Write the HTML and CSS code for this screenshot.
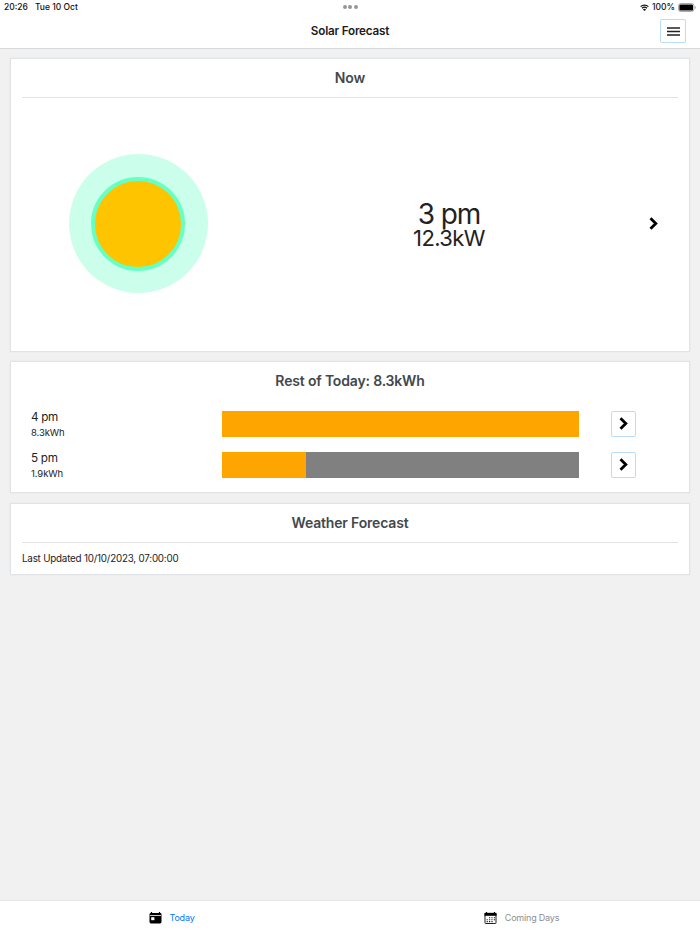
FILE: index.html
```html
<!DOCTYPE html>
<html lang="en">

<head>
    <meta charset="UTF-8">
    <meta name="viewport" content="width=device-width, initial-scale=1.0">
    <title>Solar Forecast</title>
    <link rel="stylesheet" href="styles.css">
</head>

<body>
    <header class="header">
        <div class="status-bar">
            <div class="status-left">
                <span class="status-time">20:26</span>
                <span class="status-date">Tue 10 Oct</span>
            </div>
            <div class="dots"><i></i><i></i><i></i></div>
            <div class="status-right">
                <svg class="wifi" viewBox="0 0 18 14" width="9" height="7">
                    <path d="M1.2 5.2a11.2 11.2 0 0 1 15.6 0M4 8.600a7.200 7.200 0 0 1 10 0" fill="none" stroke="#111" stroke-width="2.500" />
                    <path d="M9 14 5.900 10.900a4.500 4.500 0 0 1 6.200 0z" fill="#111" />
                </svg>
                <span class="status-power">100%</span>
                <svg class="battery" viewBox="0 0 18 9" width="18" height="9">
                    <rect x=".5" y=".5" width="15.400" height="8" rx="2.200" fill="#fff" stroke="#aaa" />
                    <rect x="1.400" y="1.400" width="13.600" height="6.200" rx="1.200" />
                    <path d="M16.800 3v3q.9-.4.9-1.500T16.800 3z" fill="#999" />
                </svg>
            </div>
        </div>
        <div class="nav-bar">
            <h1 class="nav-title">Solar Forecast</h1>
            <button class="icon-btn menu-btn" aria-label="Menu">
                <svg viewBox="0 0 13 9" width="13" height="9">
                    <path d="M0 1h13M0 4.500h13M0 8h13" stroke="#222" stroke-width="1.300" />
                </svg>
            </button>
        </div>
    </header>

    <main class="content">
        <section class="card card-now">
            <h2 class="card-title title-now">Now</h2>
            <hr class="divider">
            <div class="now">
                <div class="sun-halo">
                    <div class="sun"></div>
                </div>
                <div class="now-reading">
                    <div class="now-hour">3 pm</div>
                    <div class="now-power">12.3kW</div>
                </div>
                <svg class="chevron" viewBox="0 0 9 13" width="9" height="13">
                    <path d="M1.500 1.300 6.800 6.500 1.500 11.700" />
                </svg>
            </div>
        </section>

        <section class="card card-rest">
            <h2 class="card-title">Rest of Today: 8.3kWh</h2>
            <div class="hours">
                <div class="hour-row">
                    <div class="hour-label">
                        <div class="hour">4 pm</div>
                        <div class="energy">8.3kWh</div>
                    </div>
                    <div class="bar">
                        <div class="bar-fill" style="width: 100%"></div>
                    </div>
                    <button class="icon-btn" aria-label="4 pm details">
                        <svg class="chevron" viewBox="0 0 9 13" width="9" height="13">
                            <path d="M1.500 1.300 6.800 6.500 1.500 11.700" />
                        </svg>
                    </button>
                </div>
                <div class="hour-row">
                    <div class="hour-label">
                        <div class="hour">5 pm</div>
                        <div class="energy">1.9kWh</div>
                    </div>
                    <div class="bar">
                        <div class="bar-fill" style="width: 23.5%"></div>
                    </div>
                    <button class="icon-btn" aria-label="5 pm details">
                        <svg class="chevron" viewBox="0 0 9 13" width="9" height="13">
                            <path d="M1.500 1.300 6.800 6.500 1.500 11.700" />
                        </svg>
                    </button>
                </div>
            </div>
        </section>

        <section class="card card-weather">
            <h2 class="card-title">Weather Forecast</h2>
            <hr class="divider">
            <p class="updated">Last Updated 10/10/2023, 07:00:00</p>
        </section>
    </main>

    <nav class="tab-bar">
        <a class="tab active">
            <svg viewBox="0 0 13 12" width="13" height="12">
                <path d="M2.500 0v2M10.500 0v2" stroke="#000" stroke-width="1.200" />
                <rect x=".5" y="1" width="12" height="10.500" rx="1.400" />
                <path d="M1 3.500h11" stroke="#fff" stroke-width=".8" />
                <rect x="2.200" y="5.200" width="3.200" height="3" fill="#fff" />
            </svg>
            <span class="tab-label">Today</span>
        </a>
        <a class="tab">
            <svg viewBox="0 0 13 12" width="13" height="12">
                <path d="M2.500 0v2M10.500 0v2" stroke="#000" stroke-width="1.200" />
                <rect x="1" y="1.300" width="11" height="10.200" rx=".6" fill="#fff" stroke="#222" />
                <path d="M.5 1h12v2.800H.5z" />
                <path d="M5 5.800h6M2.600 7.700h8.400M2.600 9.600h6" stroke="#222" stroke-width="1.100" stroke-dasharray="1.200 1.200" />
            </svg>
            <span class="tab-label">Coming Days</span>
        </a>
    </nav>
</body>

</html>
```
FILE: styles.css
```css
* {
    box-sizing: border-box;
}

body {
    margin: 0;
    height: 934px;
    display: flex;
    flex-direction: column;
    background-color: #f1f1f1;
    font-family: Inter, Roboto, sans-serif;
    color: #222;
}

h1,
h2,
p {
    margin: 0;
}

.header {
    height: 49px;
    background-color: #fff;
    border-bottom: 1px solid #d8dadb;
}

.status-bar {
    height: 14px;
    padding: 0 4px 0 4px;
    display: grid;
    grid-template-columns: 1fr auto 1fr;
    align-items: center;
    font-size: 8.5px;
    font-weight: 500;
    color: #111;
}

.status-left {
    display: flex;
    gap: 7px;
}

.dots {
    display: flex;
    gap: 1.5px;
}

.dots i {
    width: 4px;
    height: 4px;
    border-radius: 50%;
    background-color: #969696;
}

.status-right {
    display: flex;
    align-items: center;
    justify-content: flex-end;
    gap: 3px;
}

.nav-bar {
    height: 34px;
    padding: 0 14px 0 40px;
    display: flex;
    align-items: center;
}

.nav-title {
    flex: 1;
    text-align: center;
    font-size: 11.7px;
    font-weight: 600;
    letter-spacing: -0.2px;
    color: #1c1c1e;
}

.icon-btn {
    width: 25px;
    height: 26px;
    padding: 0;
    display: flex;
    align-items: center;
    justify-content: center;
    background-color: #fff;
    border: 1px solid #bbdcf7;
    border-radius: 2px;
}

.menu-btn {
    width: 26px;
    height: 24px;
}

.content {
    flex: 1;
    padding: 9px 10px;
    display: flex;
    flex-direction: column;
    gap: 9px;
}

.card {
    padding: 0 11px;
    background-color: #fff;
    border: 1px solid #e1e4e7;
    box-shadow: 0 0 1px #d8dce0;
}

.card-now {
    height: 294px;
    display: flex;
    flex-direction: column;
}

.card-rest {
    height: 132px;
}

.card-weather {
    height: 72px;
    margin-top: 1px;
}

.card-title {
    height: 38px;
    line-height: 38px;
    text-align: center;
    font-size: 14px;
    font-weight: 600;
    letter-spacing: -0.17px;
    color: #43484d;
}

.title-now {
    letter-spacing: 0;
}

.divider {
    width: 100%;
    height: 1px;
    margin: 0;
    border: none;
    background-color: #e1e4e7;
}

.now {
    flex: 1;
    padding-bottom: 2px;
    display: grid;
    grid-template-columns: 232px 1fr 49px;
    align-items: center;
    justify-items: center;
}

.sun-halo {
    width: 139px;
    height: 139px;
    display: flex;
    align-items: center;
    justify-content: center;
    border-radius: 50%;
    background-color: #ccffeb;
}

.sun {
    width: 94px;
    height: 94px;
    border: 4.5px solid #66ffc4;
    border-radius: 50%;
    background-color: #ffc400;
}

.now-reading {
    padding: 3px 0 0 15px;
    text-align: center;
}

.now-hour {
    font-size: 28px;
    line-height: 26px;
    letter-spacing: -1.1px;
}

.now-power {
    font-size: 22px;
    line-height: 23px;
    letter-spacing: -0.6px;
}

.chevron path {
    fill: none;
    stroke: #000;
    stroke-width: 2.8;
}

.hours {
    padding-top: 3px;
}

.hour-row {
    height: 41px;
    padding: 0 42px 0 9px;
    display: grid;
    grid-template-columns: 191px 357px 25px;
    align-items: center;
}

.hour-row .icon-btn {
    margin-left: 32px;
}

.hour-label {
    padding-top: 2px;
}

.hour {
    font-size: 11.7px;
    line-height: 16px;
    letter-spacing: -0.3px;
}

.energy {
    font-size: 9.5px;
    line-height: 16px;
    letter-spacing: -0.1px;
}

.bar {
    height: 26px;
    background-color: gray;
}

.bar-fill {
    height: 100%;
    background-color: orange;
}

.updated {
    font-size: 9.8px;
    line-height: 31px;
    letter-spacing: -0.2px;
}

.tab-bar {
    height: 34px;
    display: flex;
    background-color: #fff;
    border-top: 1px solid #e6e6e6;
}

.tab {
    flex: 1;
    padding-right: 7px;
    display: flex;
    align-items: center;
    justify-content: center;
    gap: 8px;
    font-size: 9px;
    letter-spacing: -0.2px;
    color: #8e8e8f;
}

.tab.active {
    color: #007aff;
}
```
